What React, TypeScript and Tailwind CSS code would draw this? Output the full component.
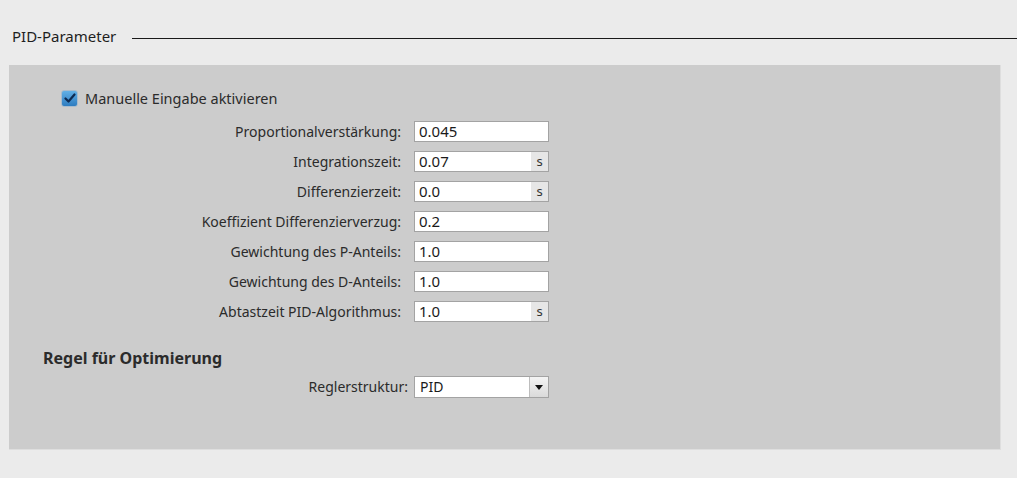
import React from "react";

type Row = { label: string; value: string; unit?: string };

const rows: Row[] = [
  { label: "Proportionalverstärkung:", value: "0.045" },
  { label: "Integrationszeit:", value: "0.07", unit: "s" },
  { label: "Differenzierzeit:", value: "0.0", unit: "s" },
  { label: "Koeffizient Differenzierverzug:", value: "0.2" },
  { label: "Gewichtung des P-Anteils:", value: "1.0" },
  { label: "Gewichtung des D-Anteils:", value: "1.0" },
  { label: "Abtastzeit PID-Algorithmus:", value: "1.0", unit: "s" },
];

function Field({ row }: { row: Row }) {
  return (
    <div className="flex items-center h-[21px]">
      <div className="w-[405px] pr-[13px] text-right text-[14px] text-[#2b2b2b] leading-none">
        {row.label}
      </div>
      <div className="flex w-[135px] h-[21px] border border-[#a3a3a3] bg-white">
        <div className="flex-1 pl-[4px] text-[15px] text-[#1a1a1a] leading-[19px]">{row.value}</div>
        {row.unit && (
          <div className="w-[17px] bg-[#e6e6e6] text-center text-[13px] text-[#333] leading-[19px]">
            {row.unit}
          </div>
        )}
      </div>
    </div>
  );
}

export default function App() {
  return (
    <div className="w-[1017px] h-[478px] bg-[#ebebeb] overflow-hidden font-['Noto_Sans','Open_Sans',sans-serif]">
      <div className="flex items-center pt-[27px] pl-[12px] h-[46px]">
        <span className="text-[15px] text-[#1e1e1e] leading-[19px]">PID-Parameter</span>
        <div className="flex-1 ml-[16px] mt-[4px] h-px bg-[#1a1a1a]" />
      </div>
      <div className="ml-[9px] mt-[19px] w-[992px] h-[385px] bg-[#cccccc] border-r border-b border-[#dedede]">
        <div className="flex items-center pl-[52px] pt-[25px]">
          <div className="w-[17px] h-[17px] rounded-[3px] border border-[#a9bccd] bg-gradient-to-b from-[#62b0e6] to-[#2d7cc0] flex items-center justify-center">
            <svg width="12" height="11" viewBox="0 0 12 11">
              <path d="M1.5 5.5 L4.5 8.5 L10.5 1.5" stroke="#0d2a52" strokeWidth="2.2" fill="none" strokeLinecap="round" strokeLinejoin="round" />
            </svg>
          </div>
          <span className="ml-[7px] text-[14.5px] text-[#2b2b2b] leading-none">Manuelle Eingabe aktivieren</span>
        </div>
        <div className="flex flex-col gap-[9px] mt-[14px]">
          {rows.map((r) => (
            <Field key={r.label} row={r} />
          ))}
        </div>
        <div className="pl-[34px] mt-[26px] text-[16px] font-bold text-[#2b2b2b] leading-[20px]">
          Regel für Optimierung
        </div>
        <div className="flex items-center h-[22px] mt-[8px]">
          <div className="w-[405px] pr-[6px] text-right text-[14px] text-[#2b2b2b] leading-none">
            Reglerstruktur:
          </div>
          <div className="flex w-[135px] h-[22px] border border-[#a3a3a3] bg-white">
            <div className="flex-1 pl-[5px] text-[14px] text-[#1a1a1a] leading-[20px]">PID</div>
            <div className="w-[19px] border-l border-[#bdbdbd] bg-gradient-to-b from-[#f4f4f4] to-[#dadada] flex items-center justify-center">
              <svg width="8" height="5" viewBox="0 0 8 5">
                <path d="M0 0 H8 L4 5 Z" fill="#111" />
              </svg>
            </div>
          </div>
        </div>
      </div>
    </div>
  );
}
